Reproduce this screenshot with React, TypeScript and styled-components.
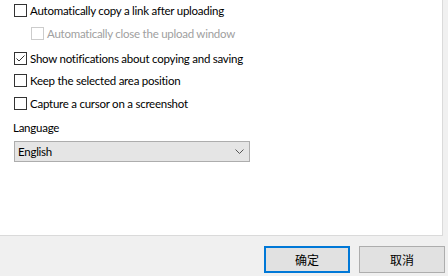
import React from "react";
import styled, { createGlobalStyle } from "styled-components";

const GlobalStyle = createGlobalStyle`
  html, body {
    margin: 0;
    padding: 0;
    background: #f0f0f0;
  }
  body {
    font-family: Lato, "Liberation Sans", sans-serif;
    font-size: 11.5px;
    letter-spacing: -0.25px;
    color: #000;
  }
`;

const Window = styled.div`
  width: 448px;
  height: 276px;
  display: flex;
  flex-direction: column;
  background: #f0f0f0;
  overflow: hidden;
`;

const Panel = styled.div`
  width: 443px;
  height: 236px;
  box-sizing: border-box;
  background: #fff;
  border-right: 1px solid #dadada;
  border-bottom: 1px solid #dadada;
  padding: 2px 0 0 14px;
  display: flex;
  flex-direction: column;
`;

const CheckRow = styled.label<{ $indent?: number; $top?: number; $disabled?: boolean }>`
  display: flex;
  align-items: center;
  gap: 3px;
  height: 17px;
  margin-left: ${({ $indent }) => $indent || 0}px;
  margin-top: ${({ $top }) => $top || 0}px;
  color: ${({ $disabled }) => ($disabled ? "#a0a0a0" : "#000")};
  white-space: nowrap;
`;

const Box = styled.span<{ $disabled?: boolean }>`
  width: 13px;
  height: 13px;
  box-sizing: border-box;
  border: 1px solid ${({ $disabled }) => ($disabled ? "#cccccc" : "#333333")};
  background: #fff;
  display: flex;
  align-items: center;
  justify-content: center;
  flex-shrink: 0;
`;

const Label = styled.div`
  margin-top: 8px;
  height: 15px;
  line-height: 15px;
  margin-left: -1px;
`;

const Select = styled.div`
  margin-top: 6px;
  width: 236px;
  height: 21px;
  box-sizing: border-box;
  background: #e5e5e5;
  border: 1px solid #adadad;
  display: flex;
  align-items: center;
  justify-content: space-between;
  padding: 0 5px 0 3px;
`;

const Footer = styled.div`
  flex: 1;
  display: flex;
  justify-content: flex-end;
  align-items: flex-start;
  gap: 9px;
  padding: 10px 3px 0 0;
`;

const Button = styled.button<{ $primary?: boolean }>`
  width: 86px;
  height: 27px;
  box-sizing: border-box;
  background: #e1e1e1;
  border: ${({ $primary }) => ($primary ? "2px solid #0078d7" : "1px solid #adadad")};
  font-family: "Noto Sans CJK SC", sans-serif;
  font-size: 12px;
  letter-spacing: 0;
  color: #000;
  padding: 0;
  margin: 0;
`;

function Checkbox({
  label,
  checked,
  disabled,
  indent,
  top,
}: {
  label: string;
  checked?: boolean;
  disabled?: boolean;
  indent?: number;
  top?: number;
}) {
  return (
    <CheckRow $indent={indent} $top={top} $disabled={disabled}>
      <Box $disabled={disabled}>
        {checked && (
          <svg width="11" height="11" viewBox="0 0 11 11">
            <path d="M1.5 5.5 L4 8 L9.5 2.5" fill="none" stroke="#333" strokeWidth="1" />
          </svg>
        )}
      </Box>
      <span>{label}</span>
    </CheckRow>
  );
}

export default function App() {
  return (
    <>
      <GlobalStyle />
      <Window>
        <Panel>
          <Checkbox label="Automatically copy a link after uploading" />
          <Checkbox
            label="Automatically close the upload window"
            disabled
            indent={17}
            top={6}
          />
          <Checkbox label="Show notifications about copying and saving" checked top={8} />
          <Checkbox label="Keep the selected area position" top={5} />
          <Checkbox label="Capture a cursor on a screenshot" top={6} />
          <Label>Language</Label>
          <Select>
            <span>English</span>
            <svg width="9" height="5" viewBox="0 0 9 5">
              <path d="M0.5 0.5 L4.5 4.5 L8.5 0.5" fill="none" stroke="#555" strokeWidth="1" />
            </svg>
          </Select>
        </Panel>
        <Footer>
          <Button $primary>确定</Button>
          <Button>取消</Button>
        </Footer>
      </Window>
    </>
  );
}
